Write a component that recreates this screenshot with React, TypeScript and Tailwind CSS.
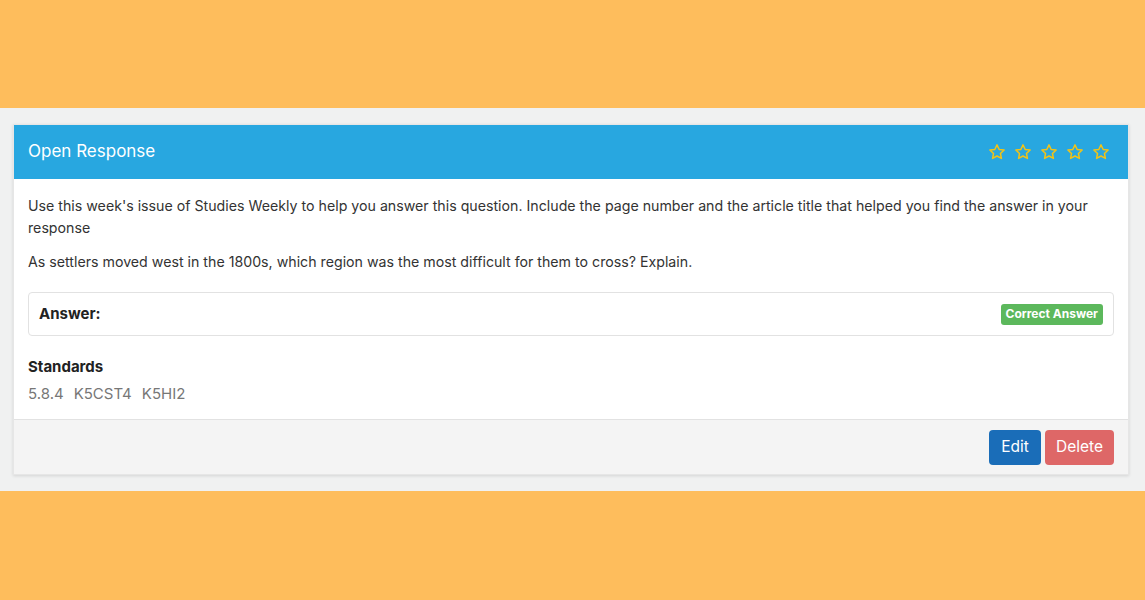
import React from "react";

function StarOutline() {
  return (
    <svg width="18" height="18" viewBox="0 0 24 24" fill="none" stroke="#F2C316" strokeWidth="2" strokeLinejoin="round">
      <path d="M12 2.5l2.9 6.1 6.6.8-4.9 4.6 1.3 6.6L12 17.3l-5.9 3.3 1.3-6.6-4.9-4.6 6.6-.8z" />
    </svg>
  );
}

export default function App() {
  return (
    <div className="w-[1145px] h-[600px] flex flex-col bg-[#FEBD5C]" style={{ fontFamily: "Inter, 'Noto Sans', sans-serif" }}>
      <div className="h-[108px] shrink-0" />
      <div className="h-[383px] shrink-0 bg-[#F0F1F1] pt-[16px] px-[13px]">
        <div className="w-[1116px] bg-white shadow-[0_1px_3px_rgba(0,0,0,0.12)] border border-[#e6e6e6]">
          <div className="h-[54px] bg-[#28A7E0] flex items-center justify-between pl-[14px] pr-[18px]">
            <span className="text-white text-[17px]">Open Response</span>
            <div className="flex gap-[8px]">
              <StarOutline />
              <StarOutline />
              <StarOutline />
              <StarOutline />
              <StarOutline />
            </div>
          </div>
          <div className="px-[14px] pt-[16px] pb-[14px] text-[#333]">
            <p className="text-[14.2px] leading-[22px]">
              Use this week's issue of Studies Weekly to help you answer this question. Include the page number and the article title that helped you find the answer in your response
            </p>
            <p className="text-[14.2px] leading-[22px] mt-[12px]">
              As settlers moved west in the 1800s, which region was the most difficult for them to cross? Explain.
            </p>
            <div className="mt-[19px] h-[44px] border border-[#e2e2e2] rounded-[4px] flex items-center justify-between pl-[10px] pr-[10px]">
              <span className="font-bold text-[15px] text-[#222]">Answer:</span>
              <span className="bg-[#5CB85C] text-white font-bold text-[12px] rounded-[3px] px-[5px] h-[21px] flex items-center">Correct Answer</span>
            </div>
            <div className="mt-[21px] font-bold text-[15px] text-[#222] leading-[20px]">Standards</div>
            <div className="mt-[6px] text-[15px] text-[#777] leading-[22px] flex gap-[10px]">
              <span>5.8.4</span>
              <span>K5CST4</span>
              <span>K5HI2</span>
            </div>
          </div>
          <div className="h-[55px] bg-[#F4F4F4] border-t border-[#e2e2e2] flex items-center justify-end gap-[4px] pr-[14px]">
            <button className="h-[35px] w-[52px] rounded-[4px] bg-[#1A6DB8] text-white text-[15.5px]">Edit</button>
            <button className="h-[35px] w-[69px] rounded-[4px] bg-[#DE6767] text-white text-[15.5px]">Delete</button>
          </div>
        </div>
      </div>
      <div className="flex-1" />
    </div>
  );
}
